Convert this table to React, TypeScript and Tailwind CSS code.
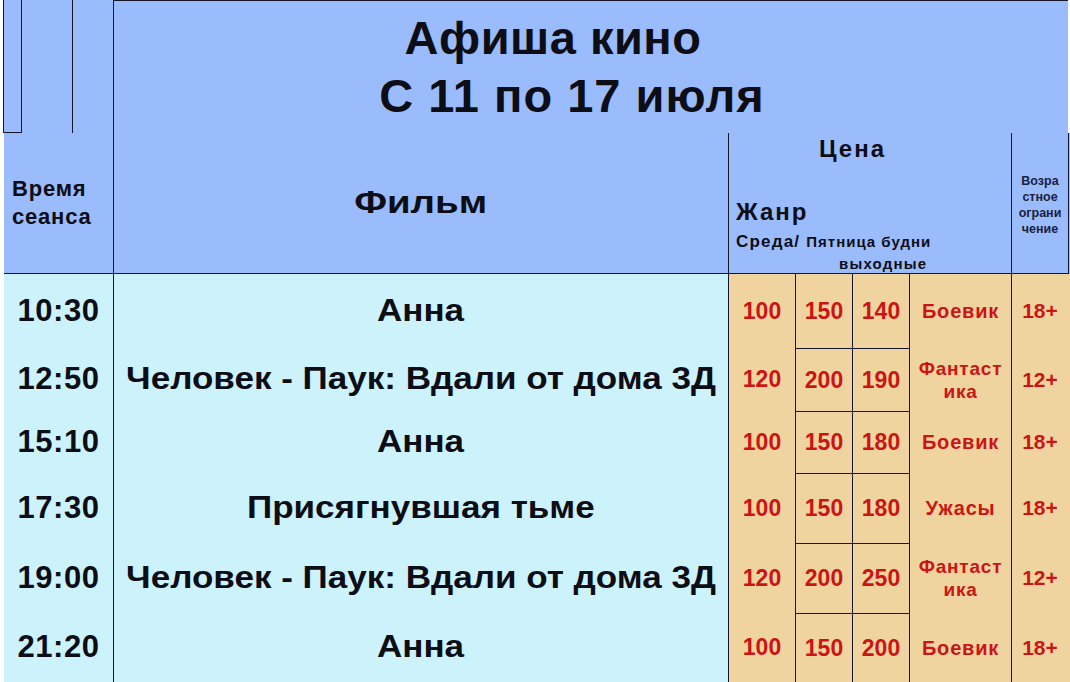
const rows = [
  { time: "10:30", film: "Анна", p: ["100", "150", "140"], genre: "Боевик", age: "18+", h: "h-[74px]" },
  { time: "12:50", film: "Человек - Паук: Вдали от дома 3Д", p: ["120", "200", "190"], genre: "Фантаст ика", age: "12+", h: "h-[63px]" },
  { time: "15:10", film: "Анна", p: ["100", "150", "180"], genre: "Боевик", age: "18+", h: "h-[62px]" },
  { time: "17:30", film: "Присягнувшая тьме", p: ["100", "150", "180"], genre: "Ужасы", age: "18+", h: "h-[70px]" },
  { time: "19:00", film: "Человек - Паук: Вдали от дома 3Д", p: ["120", "200", "250"], genre: "Фантаст ика", age: "12+", h: "h-[70px]" },
  { time: "21:20", film: "Анна", p: ["100", "150", "200"], genre: "Боевик", age: "18+", h: "h-[69px]" },
];

const line = "border-[#15152b]";
const blue = "bg-[#9abcfc]";
const cyan = "bg-[#ccf2fc]";
const tan = "bg-[#f0d4a0]";
const red = "text-[#cc1414]";

function GenreText({ text }: { text: string }) {
  const parts = text.split(" ");
  if (parts.length > 1) {
    return (
      <div className="text-[19px] leading-[23px] tracking-[0.8px] text-center">
        <div>{parts[0]}</div>
        <div>{parts[1]}</div>
      </div>
    );
  }
  return <div className="text-[20px] tracking-[0.8px]">{text}</div>;
}

export default function App() {
  return (
    <div className="w-[1070px] h-[682px] bg-white overflow-hidden font-['Liberation_Sans',Arial,sans-serif] font-bold text-[#0d0d16]">
      <div className="grid grid-cols-[4px_109px_615px_67px_57px_57px_102px_57px_2px] grid-rows-[133px_141px]">
        {/* title row */}
        <div className="col-span-2 flex h-[133px] bg-white">
          <div className="w-[3px]" />
          <div className={`w-[19px] border-l border-r border-b ${line} ${blue}`} />
          <div className={`w-[51px] border-r ${line} ${blue}`} />
          <div className={`flex-1 ${blue}`} />
        </div>
        <div className={`col-span-6 border-l border-t ${line} ${blue} pt-[8px] text-[47px] leading-[58px] text-center`}>
          <div className="pr-[76px] tracking-[0.5px]">Афиша кино</div>
          <div className="pr-[38px] tracking-[1px]">С 11 по 17 июля</div>
        </div>
        <div className="bg-white" />

        {/* header row */}
        <div className="bg-white" />
        <div className={`border-b ${line} ${blue} pl-[8px] pt-[42px] text-[22px] leading-[28px] tracking-[0.8px]`}>
          <div>Время</div>
          <div>сеанса</div>
        </div>
        <div className={`border-l border-b ${line} ${blue} flex items-center justify-center text-[31px]`}>
          <span className="scale-x-[1.24]">Фильм</span>
        </div>
        <div className={`col-span-4 border-l border-b ${line} ${blue} flex flex-col pl-[7px]`}>
          <div className="text-[24px] leading-[28px] tracking-[2px] pt-[2px] pl-[83px]">Цена</div>
          <div className="text-[24px] leading-[28px] tracking-[2px] mt-[35px]">Жанр</div>
          <div className="flex items-baseline leading-[20px] mt-[6px]">
            <span className="text-[17px] tracking-[1.2px]">Среда/</span>
            <span className="text-[15px] tracking-[1px] ml-[6px]">Пятница будни</span>
          </div>
          <div className="text-[15px] leading-[20px] tracking-[1.2px] pl-[103px] mt-[2px]">выходные</div>
        </div>
        <div className={`border-l border-b ${line} ${blue} pt-[40px] text-[12.5px] leading-[16px] text-center text-[#1a2040]`}>
          <div>Возра</div>
          <div>стное</div>
          <div>ограни</div>
          <div>чение</div>
        </div>
        <div className={`${blue} border-l ${line}`} />
      </div>

      {/* body rows */}
      {rows.map((r, i) => (
        <div key={i} className={`grid grid-cols-[4px_109px_615px_67px_57px_57px_102px_57px_2px] ${r.h}`}>
          <div className="bg-white" />
          <div className={`${cyan} flex items-center justify-center text-[31px] tracking-[0.5px]`}>{r.time}</div>
          <div className={`${cyan} border-l ${line} flex items-center justify-center text-[31px] whitespace-nowrap`}>
            <span className="scale-x-[1.13]">{r.film}</span>
          </div>
          <div className={`${tan} border-l ${line} flex items-center justify-center text-[23px] ${red}`}>{r.p[0]}</div>
          <div className={`${tan} border-l ${i > 0 ? "border-t" : ""} ${line} flex items-center justify-center text-[23px] ${red}`}>
            {r.p[1]}
          </div>
          <div className={`${tan} border-l ${i > 0 ? "border-t" : ""} ${line} flex items-center justify-center text-[23px] ${red}`}>
            {r.p[2]}
          </div>
          <div className={`${tan} border-l ${line} flex items-center justify-center ${red}`}>
            <GenreText text={r.genre} />
          </div>
          <div className={`${tan} border-l ${line} flex items-center justify-center text-[21px] ${red}`}>{r.age}</div>
          <div className={tan} />
        </div>
      ))}
    </div>
  );
}
